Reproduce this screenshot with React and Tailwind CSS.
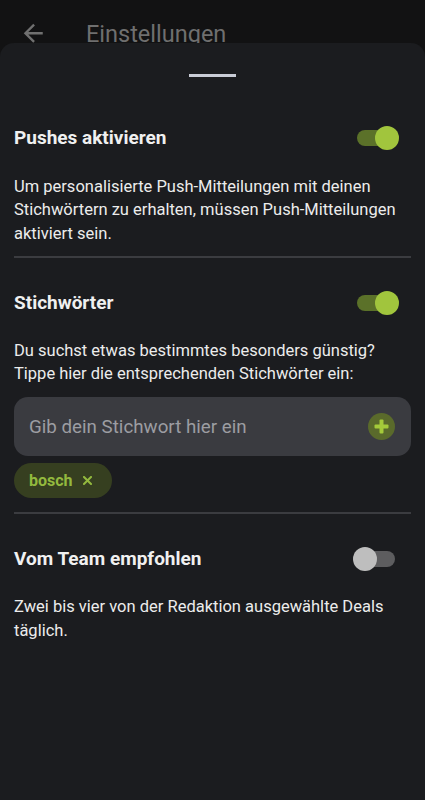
import React from "react";

function Toggle({ on }) {
  return (
    <div className="relative h-6 w-[46px] shrink-0">
      <div
        className={`absolute left-1 right-1 top-1 h-4 rounded-full ${
          on ? "bg-[#5b7129]" : "bg-[#5d5d5f]"
        }`}
      />
      <div
        className={`absolute top-0 h-6 w-6 rounded-full ${
          on ? "right-0 bg-[#a1c53d]" : "left-0 bg-[#bebebe]"
        }`}
      />
    </div>
  );
}

function Section({ title, on, children, top }) {
  return (
    <div>
      <div className={`flex h-6 items-center justify-between pr-3 ${top}`}>
        <span className="text-[19px] font-bold leading-6 text-[#f0f0f0]">{title}</span>
        <Toggle on={on} />
      </div>
      {children}
    </div>
  );
}

export default function App() {
  return (
    <div
      className="flex min-h-[800px] flex-col bg-[#121213]"
      style={{ fontFamily: "Roboto, 'Noto Sans', sans-serif" }}
    >
      <div className="relative h-[43px] shrink-0 overflow-hidden">
        <svg
          className="absolute left-[19px] top-[19px] h-[28.5px] w-[28.5px]"
          viewBox="0 0 24 24"
          fill="#707070"
        >
          <path d="M20 11H7.83l5.59-5.59L12 4l-8 8 8 8 1.41-1.41L7.83 13H20v-2z" />
        </svg>
        <div className="absolute left-[86px] top-[20px] whitespace-nowrap text-[23.5px] leading-7 text-[#6f6f6f]">
          Einstellungen
        </div>
      </div>
      <div className="flex flex-1 flex-col rounded-t-[14px] bg-[#1b1c1f] px-[14px]">
        <div className="mt-[31px] flex justify-center">
          <div className="h-[3px] w-[47px] bg-[#c9ccd6]" />
        </div>

        <Section title="Pushes aktivieren" on top="mt-[49px]">
          <p className="mt-[25px] text-[16.5px] leading-[23.3px] text-[#ececec]">
            Um personalisierte Push-Mitteilungen mit deinen Stichwörtern zu erhalten, müssen
            Push-Mitteilungen aktiviert sein.
          </p>
        </Section>
        <div className="mt-[11px] h-[2px] bg-[#3b3c40]" />

        <Section title="Stichwörter" on top="mt-[33px]">
          <p className="mt-6 text-[16.5px] leading-[23.3px] text-[#ececec]">
            Du suchst etwas bestimmtes besonders günstig? Tippe hier die entsprechenden
            Stichwörter ein:
          </p>
          <div className="mt-[12px] flex h-[59px] items-center justify-between rounded-[14px] bg-[#3a3b40] pl-[15px] pr-4">
            <span className="text-[18.75px] text-[#9c9da2]">Gib dein Stichwort hier ein</span>
            <div className="flex h-[27px] w-[27px] items-center justify-center rounded-full bg-[#5a6a2b]">
              <svg width="15" height="15" viewBox="0 0 15 15">
                <rect x="5.5" y="0.5" width="4" height="14" rx="1" fill="#a4ca3a" />
                <rect x="0.5" y="5.5" width="14" height="4" rx="1" fill="#a4ca3a" />
              </svg>
            </div>
          </div>
          <div className="mt-[7px] flex">
            <div className="flex h-[35px] items-center gap-[10px] rounded-full bg-[#363f20] pl-[15px] pr-[20px]">
              <span className="text-[16px] font-bold text-[#93b93e]">bosch</span>
              <svg width="9" height="9" viewBox="0 0 9 9">
                <path d="M1 1L8 8M8 1L1 8" stroke="#93b93e" strokeWidth="2" strokeLinecap="square" />
              </svg>
            </div>
          </div>
        </Section>
        <div className="mt-[14px] h-[2px] bg-[#3b3c40]" />

        <Section title="Vom Team empfohlen" on={false} top="mt-[33px]">
          <p className="mt-6 text-[16.5px] leading-[23.3px] text-[#ececec]">
            Zwei bis vier von der Redaktion ausgewählte Deals täglich.
          </p>
        </Section>
      </div>
    </div>
  );
}
